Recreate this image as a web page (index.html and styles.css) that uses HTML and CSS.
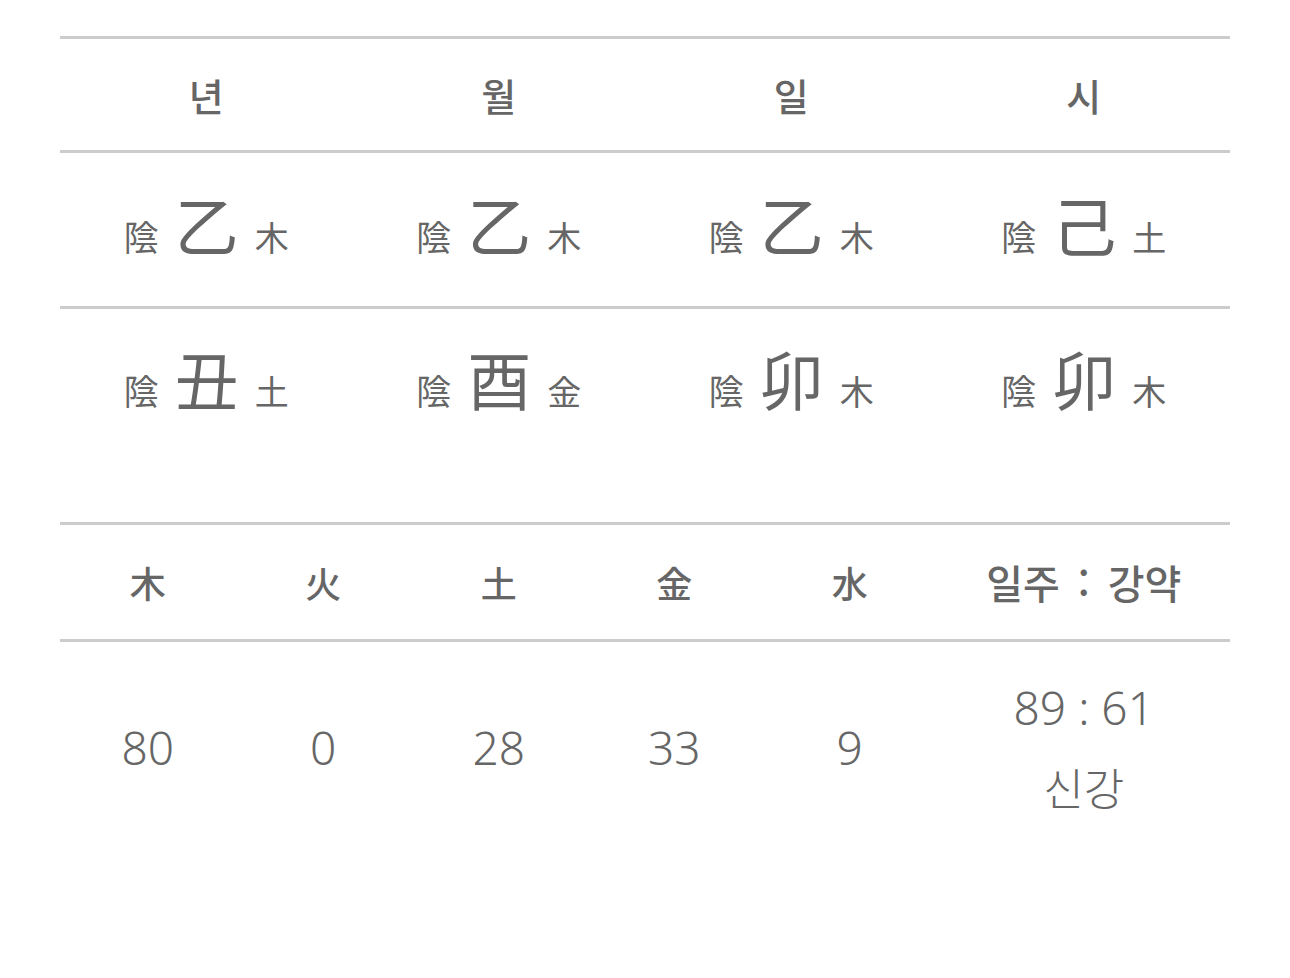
FILE: index.html
```html
<!DOCTYPE html>
<html lang="ko">
<head>
<meta charset="utf-8">
<link rel="stylesheet" href="styles.css">
</head>
<body>
<div class="page">
  <div class="pillars">
    <div class="row head">
      <div class="cell">년</div>
      <div class="cell">월</div>
      <div class="cell">일</div>
      <div class="cell">시</div>
    </div>
    <div class="row stem">
      <div class="cell"><span class="yy">陰</span><span class="big">乙</span><span class="el">木</span></div>
      <div class="cell"><span class="yy">陰</span><span class="big">乙</span><span class="el">木</span></div>
      <div class="cell"><span class="yy">陰</span><span class="big">乙</span><span class="el">木</span></div>
      <div class="cell"><span class="yy">陰</span><span class="big">己</span><span class="el">土</span></div>
    </div>
    <div class="row branch">
      <div class="cell"><span class="yy">陰</span><span class="big">丑</span><span class="el">土</span></div>
      <div class="cell"><span class="yy">陰</span><span class="big">酉</span><span class="el">金</span></div>
      <div class="cell"><span class="yy">陰</span><span class="big">卯</span><span class="el">木</span></div>
      <div class="cell"><span class="yy">陰</span><span class="big">卯</span><span class="el">木</span></div>
    </div>
  </div>

  <div class="elements">
    <div class="row head">
      <div class="cell han">木</div>
      <div class="cell han">火</div>
      <div class="cell han">土</div>
      <div class="cell han">金</div>
      <div class="cell han">水</div>
      <div class="cell">일주<span class="colon">:</span>강약</div>
    </div>
    <div class="row data">
      <div class="cell num">80</div>
      <div class="cell num">0</div>
      <div class="cell num">28</div>
      <div class="cell num">33</div>
      <div class="cell num">9</div>
      <div class="cell stack"><span class="ratio num">89<span class="colon2">:</span>61</span><span class="verdict">신강</span></div>
    </div>
  </div>
</div>
</body>
</html>
```
FILE: styles.css
```css
* { box-sizing: border-box; }
html, body {
  margin: 0;
  padding: 0;
  background: #fff;
}
body {
  font-family: "Noto Sans CJK KR", "Noto Sans", sans-serif;
  color: #666;
}
.page {
  width: 1170px;
  margin-left: 60px;
  padding-top: 36px;
}
.row {
  display: grid;
}
.pillars .row {
  grid-template-columns: repeat(4, 1fr);
}
.elements .row {
  grid-template-columns: repeat(5, 1fr) 292.5px;
}
.cell {
  display: flex;
  align-items: center;
  justify-content: center;
}
.pillars {
  border-top: 3px solid #cccccc;
}
.pillars .head {
  height: 114px;
  border-bottom: 3px solid #cccccc;
  font-size: 38px;
  font-weight: 500;
}
.pillars .stem {
  height: 156px;
  border-bottom: 3px solid #cccccc;
}
.pillars .branch {
  height: 153px;
}
.pillars .stem .cell {
  align-items: baseline;
  padding-top: 24px;
}
.pillars .branch .cell {
  align-items: baseline;
  padding-top: 22px;
}
.yy {
  font-size: 35px;
  font-weight: 400;
}
.big {
  font-size: 64px;
  font-weight: 400;
  margin: 0 16px;
}
.el {
  font-size: 34px;
  font-weight: 400;
}
.elements {
  margin-top: 60px;
  border-top: 3px solid #cccccc;
}
.elements .head {
  height: 117px;
  border-bottom: 3px solid #cccccc;
  font-size: 40px;
  font-weight: 500;
}
.elements .head .han {
  font-size: 36px;
  font-weight: 500;
}
.colon {
  margin: 0 18px;
}
.data {
  height: 230px;
  font-size: 46px;
  font-weight: 300;
  padding-bottom: 20px;
}
.num {
  font-family: "Noto Sans", "Noto Sans CJK KR", sans-serif;
  font-weight: 300;
}
.stack {
  flex-direction: column;
}
.ratio {
  line-height: 80px;
}
.colon2 {
  margin: 0 12px;
}
.verdict {
  font-size: 44px;
  line-height: 80px;
}
```
